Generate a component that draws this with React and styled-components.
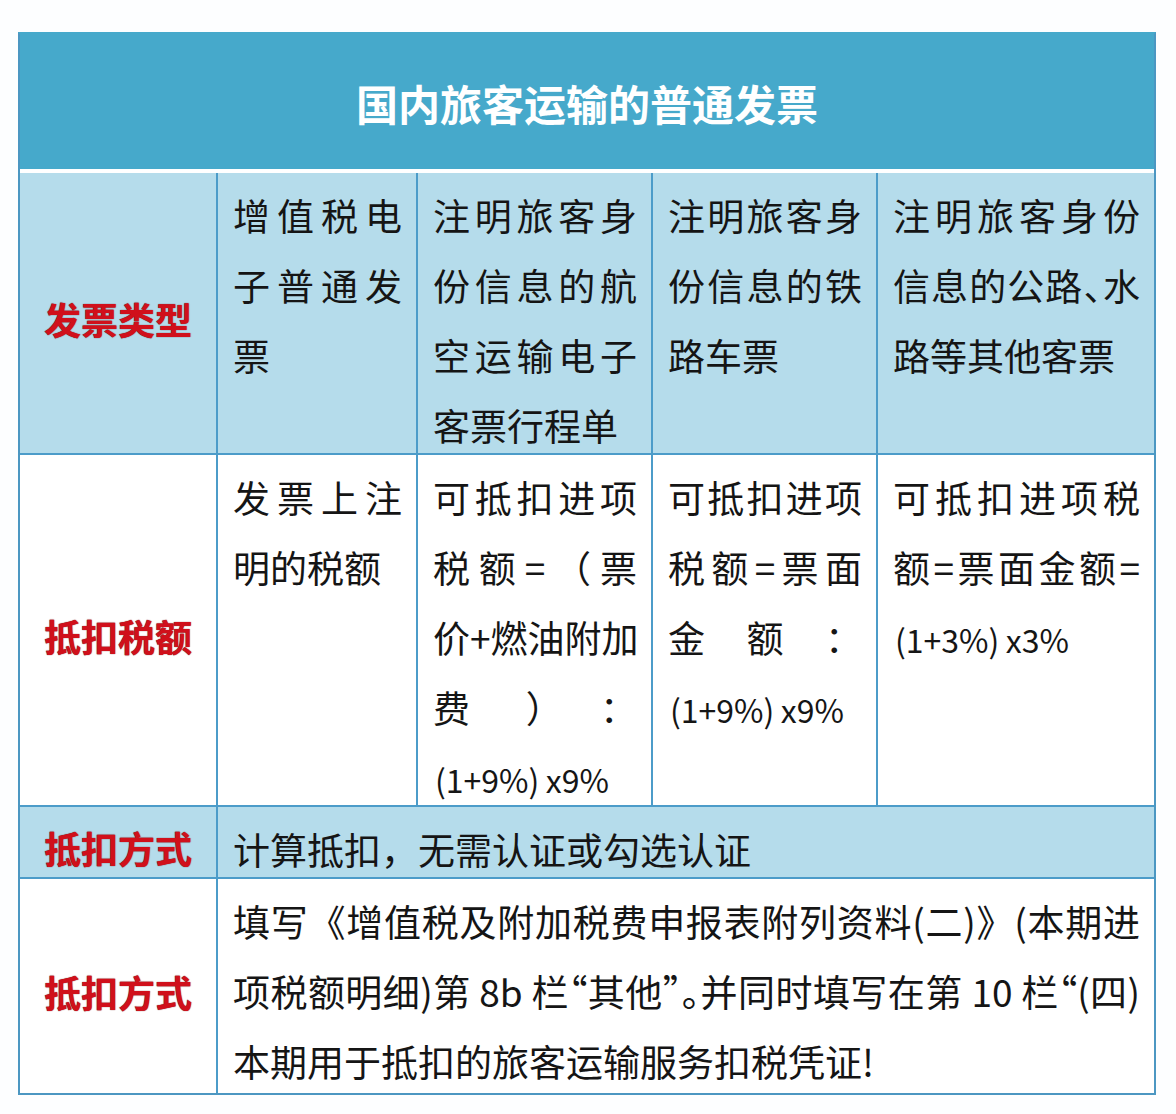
import React from "react";
import styled, { createGlobalStyle } from "styled-components";

const GlobalStyle = createGlobalStyle`
  html, body {
    margin: 0;
    padding: 0;
    background: #fdfeff;
  }
  body {
    font-family: "Noto Sans CJK SC", "Noto Sans", sans-serif;
  }
`;

const Page = styled.div`
  width: 1176px;
  height: 1114px;
  box-sizing: border-box;
  padding: 32px 0 0 18px;
  background: #fdfeff;
`;

const Table = styled.div`
  width: 1138px;
  box-sizing: border-box;
  border: 2px solid #4c97c2;
  border-top-color: #46a9cb;
  background: #ffffff;
`;

const Header = styled.div`
  height: 139px;
  box-sizing: border-box;
  padding-top: 2px;
  display: flex;
  align-items: center;
  justify-content: center;
  background: #46a9cb;
  border-bottom: 4px solid #ffffff;
  color: #ffffff;
  font-size: 42px;
  font-weight: 700;
  font-family: "Noto Sans CJK SC", sans-serif;
`;

const Grid = styled.div`
  display: grid;
  grid-template-columns: 198px 200px 235px 225px 276px;
  grid-template-rows: 282px 352px 72px 214px;
`;

const Cell = styled.div`
  box-sizing: border-box;
  min-width: 0;
  background: ${(p) => (p.$tint ? "#b5dceb" : "#ffffff")};
  border-right: ${(p) => (p.$last ? "none" : "2px solid #4c9cc9")};
  border-bottom: ${(p) => (p.$bottom ? "none" : "2px solid #4c9cc9")};
  grid-column: ${(p) => p.$span || "auto"};
  overflow: visible;
`;

const LabelCell = styled(Cell)`
  display: flex;
  align-items: center;
  justify-content: center;
  padding-top: 12px;
  color: #d0101b;
  font-size: 37px;
  font-weight: 700;
  text-shadow: 0 0 1px #5a0000;
  font-family: "Noto Sans CJK SC", sans-serif;
`;

const TextCell = styled(Cell)`
  padding: 7px 14px 0 15px;
  font-size: 37px;
  line-height: 70px;
  color: #151515;
  font-family: "Noto Sans CJK SC", sans-serif;
`;

const Line = styled.div`
  white-space: nowrap;
  text-align: ${(p) => (p.$justify ? "justify" : "left")};
  text-align-last: ${(p) => (p.$justify ? "justify" : "left")};
  text-justify: inter-character;
`;

const Halt = styled.span`
  font-feature-settings: "halt" 1;
`;

const Formula = styled.span`
  font-size: 32px;
  padding-left: 2px;
`;

const Lines = ({ lines }) =>
  lines.map((l, i) => (
    <Line key={i} $justify={l.j}>
      {l.t}
    </Line>
  ));

const formula = (rate) => <Formula>{`(1+${rate}%)\u2009x${rate}%`}</Formula>;

const row1 = [
  [
    { t: "增值税电", j: true },
    { t: "子普通发", j: true },
    { t: "票" },
  ],
  [
    { t: "注明旅客身", j: true },
    { t: "份信息的航", j: true },
    { t: "空运输电子", j: true },
    { t: "客票行程单" },
  ],
  [
    { t: "注明旅客身", j: true },
    { t: "份信息的铁", j: true },
    { t: "路车票" },
  ],
  [
    { t: "注明旅客身份", j: true },
    {
      t: (
        <>
          信息的公路<Halt>、</Halt>水
        </>
      ),
      j: true,
    },
    { t: "路等其他客票" },
  ],
];

const row2 = [
  [{ t: "发票上注", j: true }, { t: "明的税额" }],
  [
    { t: "可抵扣进项", j: true },
    { t: "税额=（票", j: true },
    { t: "价+燃油附加", j: true },
    { t: "费）：", j: true },
    { t: formula(9) },
  ],
  [
    { t: "可抵扣进项", j: true },
    { t: "税额=票面", j: true },
    { t: "金额：", j: true },
    { t: formula(9) },
  ],
  [
    { t: "可抵扣进项税", j: true },
    { t: "额=票面金额=", j: true },
    { t: formula(3) },
  ],
];

const row4 = [
  { t: "填写《增值税及附加税费申报表附列资料(二)》(本期进", j: true },
  {
    t: (
      <>
        项税额明细)第 8b 栏<Halt>“</Halt>其他<Halt>”。</Halt>并同时填写在第 10 栏<Halt>“</Halt>(四)
      </>
    ),
    j: true,
  },
  { t: "本期用于抵扣的旅客运输服务扣税凭证!" },
];

export default function App() {
  return (
    <>
      <GlobalStyle />
      <Page>
        <Table>
          <Header>国内旅客运输的普通发票</Header>
          <Grid>
            <LabelCell $tint>发票类型</LabelCell>
            {row1.map((lines, i) => (
              <TextCell key={i} $tint $last={i === row1.length - 1}>
                <Lines lines={lines} />
              </TextCell>
            ))}

            <LabelCell>抵扣税额</LabelCell>
            {row2.map((lines, i) => (
              <TextCell key={i} $last={i === row2.length - 1}>
                <Lines lines={lines} />
              </TextCell>
            ))}

            <LabelCell $tint>抵扣方式</LabelCell>
            <TextCell $tint $last $span="2 / span 4">
              <Line>计算抵扣，无需认证或勾选认证</Line>
            </TextCell>

            <LabelCell $bottom>抵扣方式</LabelCell>
            <TextCell $bottom $last $span="2 / span 4">
              <Lines lines={row4} />
            </TextCell>
          </Grid>
        </Table>
      </Page>
    </>
  );
}
